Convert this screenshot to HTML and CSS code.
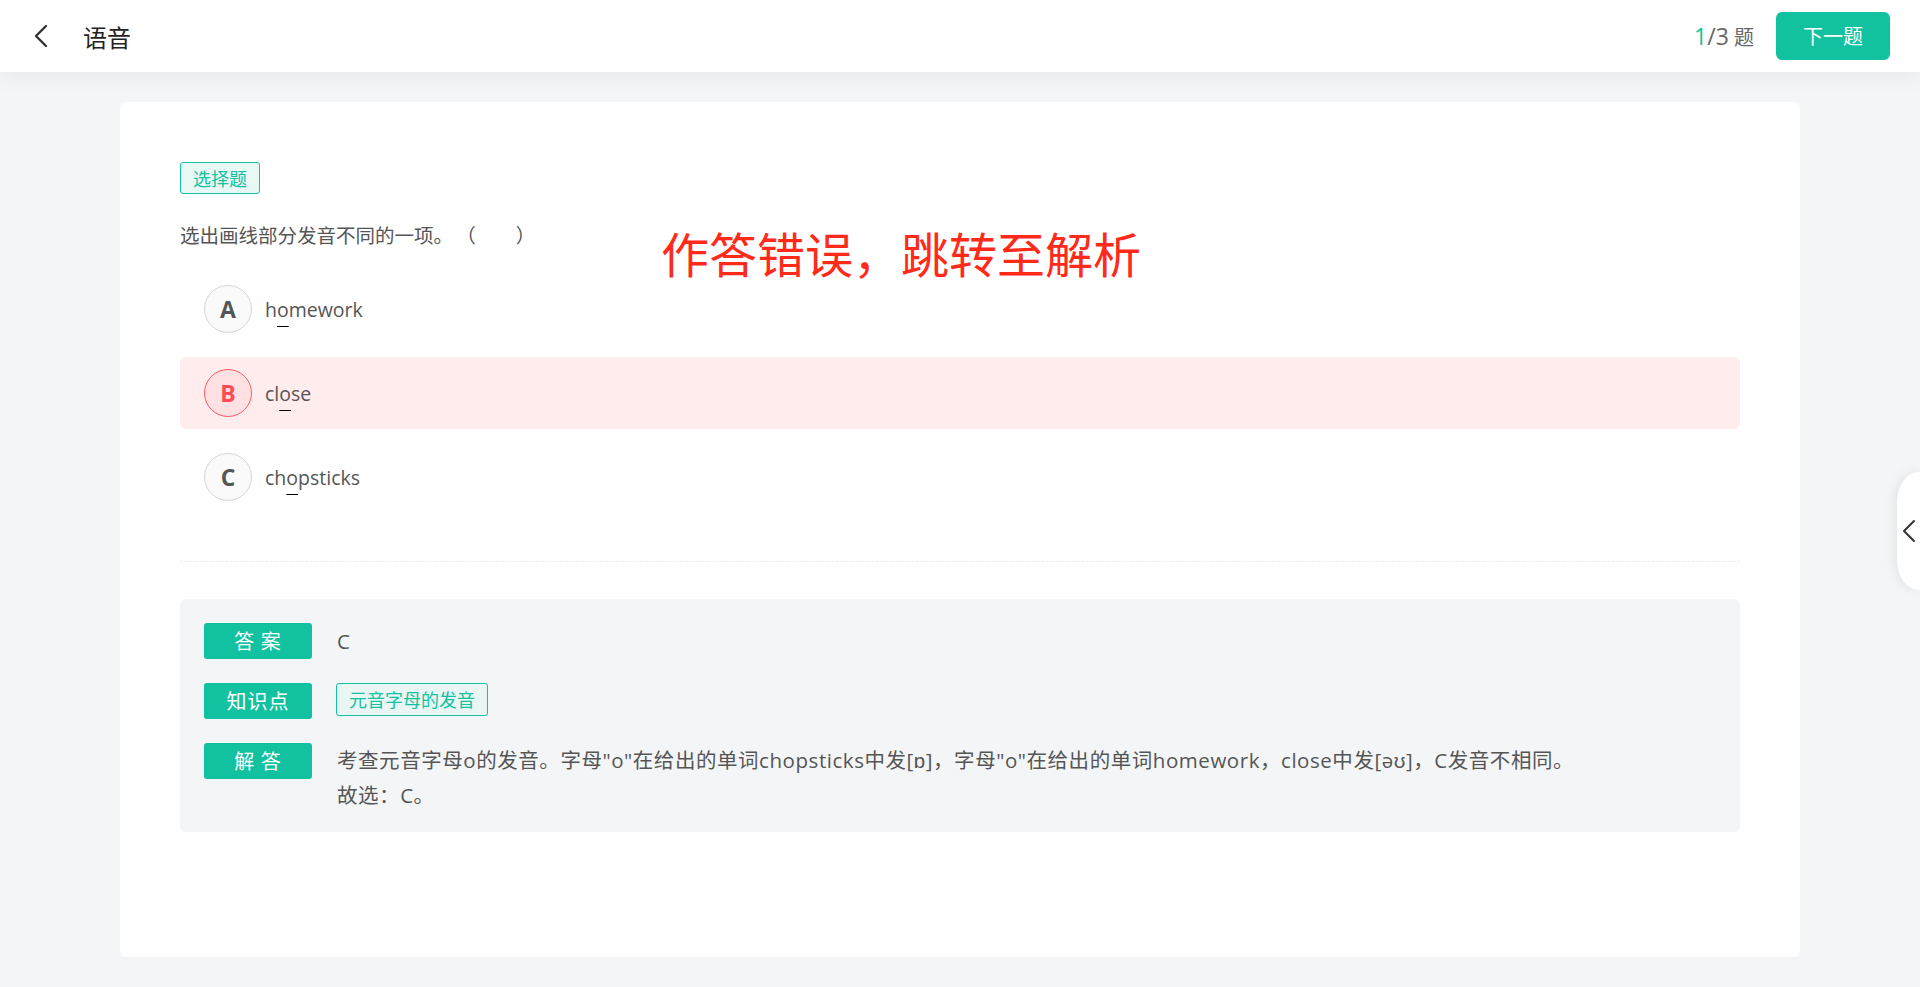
FILE: index.html
```html
<!DOCTYPE html>
<html>
    <head>
        <meta charset="utf-8">
        <title>语音</title>
        <link rel="stylesheet" href="styles.css">
    </head>
    <body>
        <!-- top bar: back, title, progress and next -->
        <div class="topbar">
            <div class="back">
                <svg width="16" height="24" viewBox="0 0 16 24"><path d="M13 2 L3 12 L13 22" fill="none" stroke="#333" stroke-width="2.4" stroke-linecap="round" stroke-linejoin="round"/></svg>
            </div>
            <div class="title">语音</div>
            <div class="progress"><span class="num"><span class="cur">1</span>/3</span> 题</div>
            <div class="next-btn">下一题</div>
        </div>

        <div class="page">
            <div class="card">
                <span class="type-tag">选择题</span>
                <div class="stem">选出画线部分发音不同的一项。<span class="blank">（<span class="gap"></span>）</span></div>

                <div class="options">
                    <div class="option">
                        <span class="letter">A</span>
                        <span class="word">h<u>o</u>mework</span>
                    </div>
                    <div class="option wrong">
                        <span class="letter">B</span>
                        <span class="word">cl<u>o</u>se</span>
                    </div>
                    <div class="option">
                        <span class="letter">C</span>
                        <span class="word">ch<u>o</u>psticks</span>
                    </div>
                </div>

                <div class="divider"></div>

                <!-- answer / analysis -->
                <div class="analysis">
                    <div class="arow">
                        <span class="label">答 案</span>
                        <span class="value">C</span>
                    </div>
                    <div class="arow">
                        <span class="label">知识点</span>
                        <span class="point-tag">元音字母的发音</span>
                    </div>
                    <div class="arow">
                        <span class="label">解 答</span>
                        <div class="value text">考查元音字母o的发音。字母"o"在给出的单词chopsticks中发[ɒ]，字母"o"在给出的单词homework，close中发[əʊ]，C发音不相同。<br>故选：C。</div>
                    </div>
                </div>

                <div class="note">作答错误，跳转至解析</div>
            </div>
        </div>

        <div class="side-tab">
            <svg width="14" height="24" viewBox="0 0 14 24"><path d="M12 2 L2 12 L12 22" fill="none" stroke="#333" stroke-width="2" stroke-linecap="round" stroke-linejoin="round"/></svg>
        </div>
    </body>
</html>
```

FILE: styles.css
```css
html, body {
    margin: 0;
    height: 100%;
}

body {
    background: #f4f5f7;
    font-family: "Open Sans", "Noto Sans CJK SC", sans-serif;
    color: #595959;
    overflow: hidden;
}

/* header */
.topbar {
    position: relative;
    z-index: 2;
    height: 72px;
    background: #fff;
    display: flex;
    align-items: center;
    box-shadow: 0 4px 24px rgba(0, 0, 0, 0.06);
}

.back {
    width: 16px;
    height: 24px;
    margin-left: 33px;
}

.title {
    margin-left: 34px;
    font-size: 24px;
    color: #222;
    font-family: "Noto Sans CJK SC", sans-serif;
}

.progress {
    margin-left: auto;
    font-size: 20px;
    color: #666;
}

.progress .num {
    font-size: 23px;
}

.progress .cur {
    color: #13c2a0;
}

.next-btn {
    margin: 0 30px 0 22px;
    width: 114px;
    height: 48px;
    line-height: 48px;
    text-align: center;
    background: #12c19f;
    color: #fff;
    font-size: 20px;
    border-radius: 6px;
    font-family: "Noto Sans CJK SC", sans-serif;
}

/* card */
.page {
    padding: 30px 120px;
}

.card {
    position: relative;
    height: calc(100vh - 132px);
    box-sizing: border-box;
    background: #fff;
    border-radius: 6px;
    padding: 60px;
}

.type-tag {
    display: inline-block;
    height: 30px;
    line-height: 30px;
    padding: 0 12px;
    font-size: 18px;
    color: #13c2a0;
    background: #e8f8f4;
    border: 1px solid #13c2a0;
    border-radius: 3px;
    font-family: "Noto Sans CJK SC", sans-serif;
}

.stem {
    margin-top: 27px;
    font-size: 19.5px;
    line-height: 30px;
    color: #555;
}

.stem .blank {
    margin-left: 13px;
}

.stem .gap {
    display: inline-block;
    width: 40px;
}

.options {
    margin-top: 22px;
    display: flex;
    flex-direction: column;
    gap: 12px;
}

.option {
    height: 72px;
    display: flex;
    align-items: center;
    padding-left: 24px;
    border-radius: 6px;
}

.letter {
    width: 46px;
    height: 46px;
    border: 1px solid #d6d6d6;
    border-radius: 50%;
    background: #fafafa;
    display: flex;
    align-items: center;
    justify-content: center;
    font-size: 23px;
    font-weight: bold;
    color: #555;
}

.word {
    margin-left: 13px;
    font-size: 19.5px;
    color: #555;
}

.word u {
    text-decoration-color: #000;
    text-underline-offset: 9px;
}

.option.wrong {
    background: #ffeced;
}

.option.wrong .letter {
    background: #ffe1e3;
    border-color: #ff5a64;
    color: #ff4a57;
}

.divider {
    margin-top: 48px;
    border-top: 1px dashed #ececec;
}

/* answer block */
.analysis {
    margin-top: 37px;
    background: #f4f5f7;
    border-radius: 6px;
    padding: 24px 24px 19px;
    display: flex;
    flex-direction: column;
    gap: 24px;
}

.arow {
    display: flex;
    align-items: flex-start;
}

.label {
    flex: none;
    width: 108px;
    height: 36px;
    line-height: 36px;
    text-align: center;
    background: #12c19f;
    color: #fff;
    font-size: 20px;
    letter-spacing: 1px;
    border-radius: 3px;
    font-family: "Noto Sans CJK SC", sans-serif;
}

.value {
    margin-left: 25px;
    font-size: 20.5px;
    line-height: 36px;
    color: #555;
}

.value.text {
    line-height: 35px;
    letter-spacing: 0.55px;
}

.point-tag {
    margin-left: 24px;
    height: 31px;
    line-height: 31px;
    padding: 0 12px;
    font-size: 18px;
    color: #13c2a0;
    background: #eaf6f3;
    border: 1px solid #13c2a0;
    border-radius: 3px;
    font-family: "Noto Sans CJK SC", sans-serif;
}

/* red annotation laid over the card */
.note {
    position: absolute;
    left: 541px;
    top: 122px;
    font-size: 48px;
    line-height: 56px;
    color: #ff2a1a;
    font-family: "Noto Sans CJK SC", sans-serif;
}

/* drawer handle on right edge */
.side-tab {
    position: fixed;
    right: 0;
    top: 472px;
    width: 23px;
    height: 118px;
    background: #fff;
    border-radius: 22px 0 0 22px / 30px 0 0 30px;
    box-shadow: -2px 0 12px rgba(0, 0, 0, 0.08);
    display: flex;
    align-items: center;
    justify-content: flex-end;
}

.side-tab svg {
    margin-right: 4px;
}
```
